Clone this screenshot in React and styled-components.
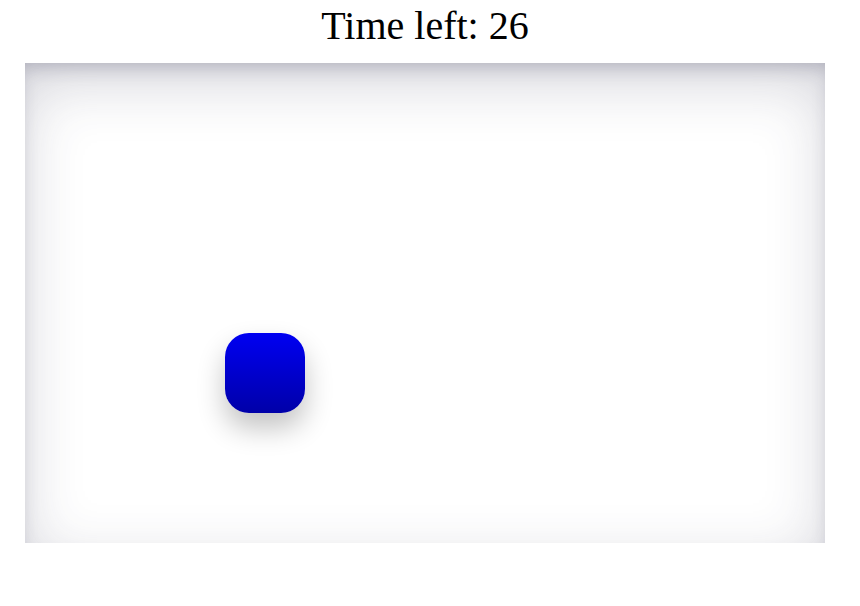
import React from "react";
import styled, { createGlobalStyle } from "styled-components";

const Global = createGlobalStyle`
  html, body { margin: 0; padding: 0; background: #ffffff; }
  body { font-family: "Liberation Serif", "Times New Roman", serif; }
`;

const Page = styled.div`
  width: 850px;
  display: flex;
  flex-direction: column;
  align-items: center;
  padding-top: 3px;
`;

const Title = styled.h1`
  margin: 0 0 15px 0;
  font-family: "Liberation Serif", "Times New Roman", serif;
  font-weight: 400;
  font-size: 40px;
  line-height: 45px;
  color: #000;
`;

const Arena = styled.div`
  position: relative;
  width: 800px;
  height: 480px;
  background: #ffffff;
  box-shadow: inset 0 20px 60px rgba(50, 50, 80, 0.2),
    inset 0 10px 18px -6px rgba(50, 50, 80, 0.26);
`;

const Target = styled.div`
  position: absolute;
  left: ${(p) => p.x}px;
  top: ${(p) => p.y}px;
  width: 80px;
  height: 80px;
  border-radius: 24px;
  background: linear-gradient(180deg, #0000f2 0%, #0000a8 100%);
  box-shadow: 0 15px 28px rgba(0, 0, 0, 0.24);
`;

export default function App() {
  return (
    <>
      <Global />
      <Page>
        <Title>Time left: 26</Title>
        <Arena>
          <Target x={200} y={270} />
        </Arena>
      </Page>
    </>
  );
}
